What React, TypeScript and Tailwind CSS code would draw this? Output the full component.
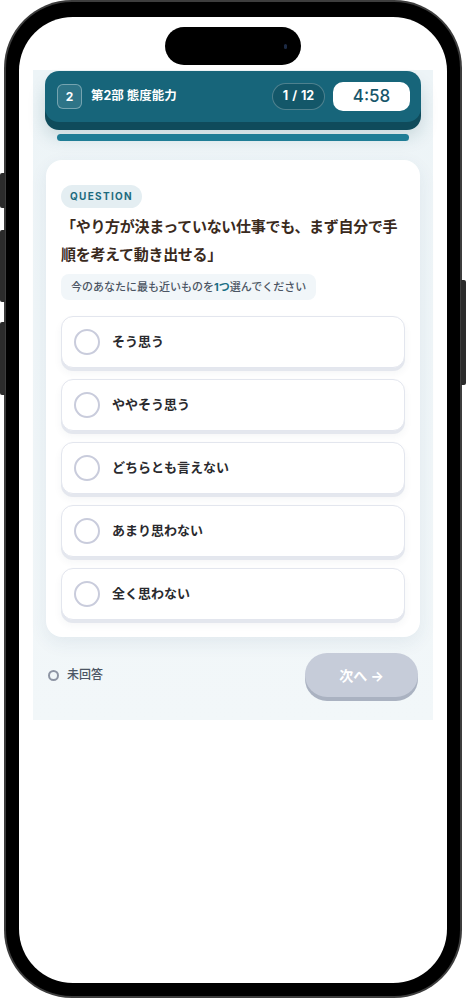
const OPTIONS = ['そう思う', 'ややそう思う', 'どちらとも言えない', 'あまり思わない', '全く思わない']

const FONT = 'font-["Inter","Noto_Sans_CJK_JP",sans-serif]'

function Header() {
  return (
    <div className="flex h-[51px] items-center rounded-[14px] bg-[#17657a] pl-[12px] pr-[11px] shadow-[0_8px_0_#0f4b5b,0_14px_18px_rgba(15,75,91,0.18)]">
      <div className="flex h-[25px] w-[25px] items-center justify-center rounded-[6px] border border-white/35 bg-white/10 text-[12px] font-bold text-white">
        2
      </div>
      <span className="ml-[9px] text-[12.5px] font-bold text-white">第2部 態度能力</span>
      <div className="ml-auto flex h-[27px] w-[53px] items-center justify-center gap-[4px] rounded-full border border-white/25 bg-[#135769] text-[12.5px] font-bold text-white">
        <span>1</span>
        <span>/</span>
        <span>12</span>
      </div>
      <div className="ml-[8px] flex h-[29px] w-[77px] items-center justify-center rounded-[10px] bg-white text-[17px] font-medium text-[#17566a]">
        4:58
      </div>
    </div>
  )
}

function Option({ label }: { label: string }) {
  return (
    <button
      type="button"
      className="flex h-[52px] w-full items-center rounded-[12px] border border-[#e3e6ee] bg-white pl-[12px] text-left shadow-[0_3px_0_#e4e7ee,0_5px_8px_rgba(30,50,80,0.05)]"
    >
      <span className="h-[26px] w-[26px] shrink-0 rounded-full border-2 border-[#c9ccdc] bg-white" />
      <span className="ml-[12px] text-[13px] font-bold text-[#2a2a2e]">{label}</span>
    </button>
  )
}

export default function App() {
  return (
    <div className={`relative h-[1000px] w-[466px] bg-white ${FONT}`}>
      {/* side buttons */}
      <div className="absolute left-0 top-[173px] h-[35px] w-[5px] rounded-l-[2px] bg-[#2b2b2b]" />
      <div className="absolute left-0 top-[230px] h-[72px] w-[5px] rounded-l-[2px] bg-[#2b2b2b]" />
      <div className="absolute left-0 top-[322px] h-[73px] w-[5px] rounded-l-[2px] bg-[#2b2b2b]" />
      <div className="absolute right-0 top-[280px] h-[105px] w-[5px] rounded-r-[2px] bg-[#2b2b2b]" />

      <div className="ml-[4px] h-[998px] w-[458px] rounded-[68px] bg-[#3d3d3d] p-[2px]">
        <div className="h-full rounded-[66px] bg-black px-[13px] pb-[13px] pt-[15px]">
          <div className="flex h-full flex-col items-center overflow-hidden rounded-[54px] bg-white">
            <div className="mt-[10px] flex h-[38px] w-[136px] items-center justify-end rounded-full bg-black pr-[14px]">
              <span className="h-[5px] w-[3px] rounded-full bg-[#1c2a44]" />
            </div>

            <div className="mt-[5px] w-[400px] bg-gradient-to-b from-[#edf4f7] to-[#f2f7f9] px-[12px] pb-[23px] pt-[1px]">
              <Header />
              <div className="mx-[12px] mt-[12px] h-[7px] rounded-full bg-[#1f7d96]" />

              <div className="mx-[1px] mt-[19px] rounded-[16px] bg-white px-[15px] pb-[17px] pt-[22px] shadow-[0_6px_18px_rgba(40,80,110,0.08)]">
                <span className="inline-flex h-[23px] items-center rounded-full bg-[#e4eef2] px-[9px] text-[10px] font-bold tracking-[0.13em] text-[#1d6b7f]">
                  QUESTION
                </span>
                <p className="mt-[5px] text-[15px] font-bold leading-[28px] tracking-[-0.3px] text-[#3a2a1d]">
                  「やり方が決まっていない仕事でも、まず自分で手順を考えて動き出せる」
                </p>
                <div className="mt-[5px] inline-flex h-[26px] items-center rounded-[8px] bg-[#f1f6f9] px-[10px] text-[11px] font-medium text-[#4b5563]">
                  今のあなたに最も近いものを<span className="font-bold text-[#1b6f85]">1つ</span>選んでください
                </div>
                <div className="mt-[16px] flex flex-col gap-[11px]">
                  {OPTIONS.map((o) => (
                    <Option key={o} label={o} />
                  ))}
                </div>
              </div>

              <div className="mt-[16px] flex items-center pl-[3px] pr-[3px]">
                <span className="h-[11px] w-[11px] rounded-full border-2 border-[#8e95a4]" />
                <span className="ml-[8px] text-[12px] font-medium text-[#4b5563]">未回答</span>
                <button
                  type="button"
                  className="ml-auto flex h-[44px] w-[113px] items-center justify-center rounded-full bg-[#c6ccd9] text-[14px] font-bold text-white shadow-[0_4px_0_#aab2c1]"
                >
                  次へ →
                </button>
              </div>
            </div>
          </div>
        </div>
      </div>
    </div>
  )
}
